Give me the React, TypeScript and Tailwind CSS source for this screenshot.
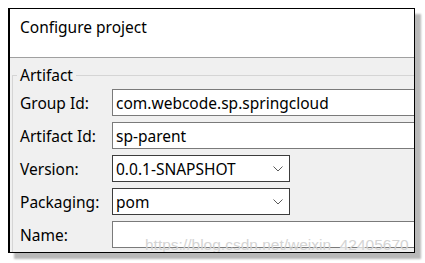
const ROWS = [
  { label: 'Group Id:', value: 'com.webcode.sp.springcloud', kind: 'text' },
  { label: 'Artifact Id:', value: 'sp-parent', kind: 'text' },
  { label: 'Version:', value: '0.0.1-SNAPSHOT', kind: 'select' },
  { label: 'Packaging:', value: 'pom', kind: 'select' },
  { label: 'Name:', value: '', kind: 'text' },
] as const

function Chevron() {
  return (
    <svg width="10" height="6" viewBox="0 0 10 6" fill="none" aria-hidden="true">
      <path d="M0.5 0.5L5 5L9.5 0.5" stroke="#5a5a5a" strokeWidth="1" />
    </svg>
  )
}

export default function App() {
  return (
    <div className="w-[425px] h-[263px] bg-white pt-2 pl-2 font-['Noto_Sans','Open_Sans',sans-serif] text-[15.5px] text-black">
      {/* ── Dialog ── */}
      <div className="relative w-[407px] h-[245px] border border-black border-l-2 bg-[#f0f0f0] overflow-hidden shadow-[6px_6px_2px_rgba(0,0,0,0.28)]">
        {/* Header */}
        <div className="h-[49px] bg-white border-b border-[#a0a0a0] pl-[10px] pt-[8px] leading-[20px]">
          Configure project
        </div>

        {/* Artifact group */}
        <fieldset className="mt-[7px] ml-[2px] w-[460px] border border-[#d5d5d5] pl-[7px] pb-2">
          <legend className="-ml-[3px] px-[3px] leading-[20px]">Artifact</legend>
          <div className="flex flex-col gap-[6px] pt-[4px]">
            {ROWS.map(({ label, value, kind }) => (
              <div key={label} className="flex items-center">
                <div className="w-[92px] leading-[20px]">{label}</div>
                {kind === 'text' ? (
                  <div className="w-[330px] h-[27px] bg-white border border-[#7a7a7a] pl-[3px] flex items-center leading-[20px]">
                    {value}
                  </div>
                ) : (
                  <div className="w-[178px] h-[27px] bg-white border border-[#3c3c3c] pl-[3px] pr-[6px] flex items-center justify-between leading-[20px]">
                    <span>{value}</span>
                    <Chevron />
                  </div>
                )}
              </div>
            ))}
          </div>
        </fieldset>

        {/* Watermark overlay */}
        <div className="absolute left-[135px] top-[227px] text-[15.5px] leading-[18px] text-[#d4d4d4] font-['Liberation_Sans',sans-serif] whitespace-nowrap pointer-events-none">
          https://blog.csdn.net/weixin_42405670
        </div>
      </div>
    </div>
  )
}
